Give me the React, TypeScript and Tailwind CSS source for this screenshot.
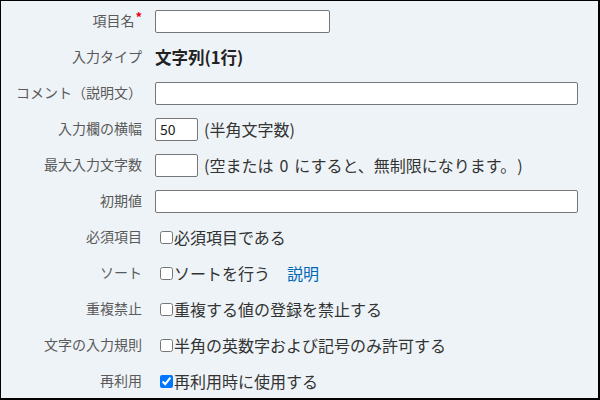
import React from "react";

const font = { fontFamily: '"Noto Sans CJK JP", "Noto Sans", sans-serif' };

function Row({ label, required, children }: { label: string; required?: boolean; children: React.ReactNode }) {
  return (
    <div className="flex h-[36px] items-center">
      <div className="w-[141px] shrink-0 pb-[3px] text-right text-[14px] leading-none text-[#5a5a5a]">
        {label}
        {required && <span className="relative -top-[4px] ml-[1px] text-[13px] font-bold text-[#e60012]">*</span>}
      </div>
      <div className="ml-[13px] flex min-w-0 flex-1 items-center text-[16px] leading-none text-[#333]">{children}</div>
    </div>
  );
}

function TextBox({ w, value }: { w: string; value?: string }) {
  return (
    <input
      readOnly
      defaultValue={value}
      className={`${w} h-[23px] rounded-[2px] border border-[#767676] bg-white px-[4px] text-[14px] text-[#222] outline-none`}
    />
  );
}

function Check({ checked, children }: { checked?: boolean; children: React.ReactNode }) {
  return (
    <label className="flex items-center">
      <input type="checkbox" readOnly defaultChecked={checked} className="ml-[5px] mr-[1px] h-[13px] w-[13px]" />
      <span>{children}</span>
    </label>
  );
}

export default function App() {
  return (
    <div className="h-[400px] w-[600px] border border-r-2 border-b-2 border-black bg-[#eef3f7] pt-[2px]" style={font}>
      <Row label="項目名" required>
        <TextBox w="w-[175px]" />
      </Row>
      <Row label="入力タイプ">
        <span className="text-[16.5px] font-bold text-[#222]">文字列(1行)</span>
      </Row>
      <Row label="コメント（説明文）">
        <TextBox w="w-[423px]" />
      </Row>
      <Row label="入力欄の横幅">
        <TextBox w="w-[43px]" value="50" />
        <span className="ml-[6px]">(半角文字数)</span>
      </Row>
      <Row label="最大入力文字数">
        <TextBox w="w-[43px]" />
        <span className="ml-[6px]">
          (空または<span className="mx-[6px]">0</span>にすると、無制限になります。<span className="ml-[9px]">)</span>
        </span>
      </Row>
      <Row label="初期値">
        <TextBox w="w-[423px]" />
      </Row>
      <Row label="必須項目">
        <Check>必須項目である</Check>
      </Row>
      <Row label="ソート">
        <Check>ソートを行う</Check>
        <a className="ml-[17px] text-[#0068b7]">説明</a>
      </Row>
      <Row label="重複禁止">
        <Check>重複する値の登録を禁止する</Check>
      </Row>
      <Row label="文字の入力規則">
        <Check>半角の英数字および記号のみ許可する</Check>
      </Row>
      <Row label="再利用">
        <Check checked>再利用時に使用する</Check>
      </Row>
    </div>
  );
}
